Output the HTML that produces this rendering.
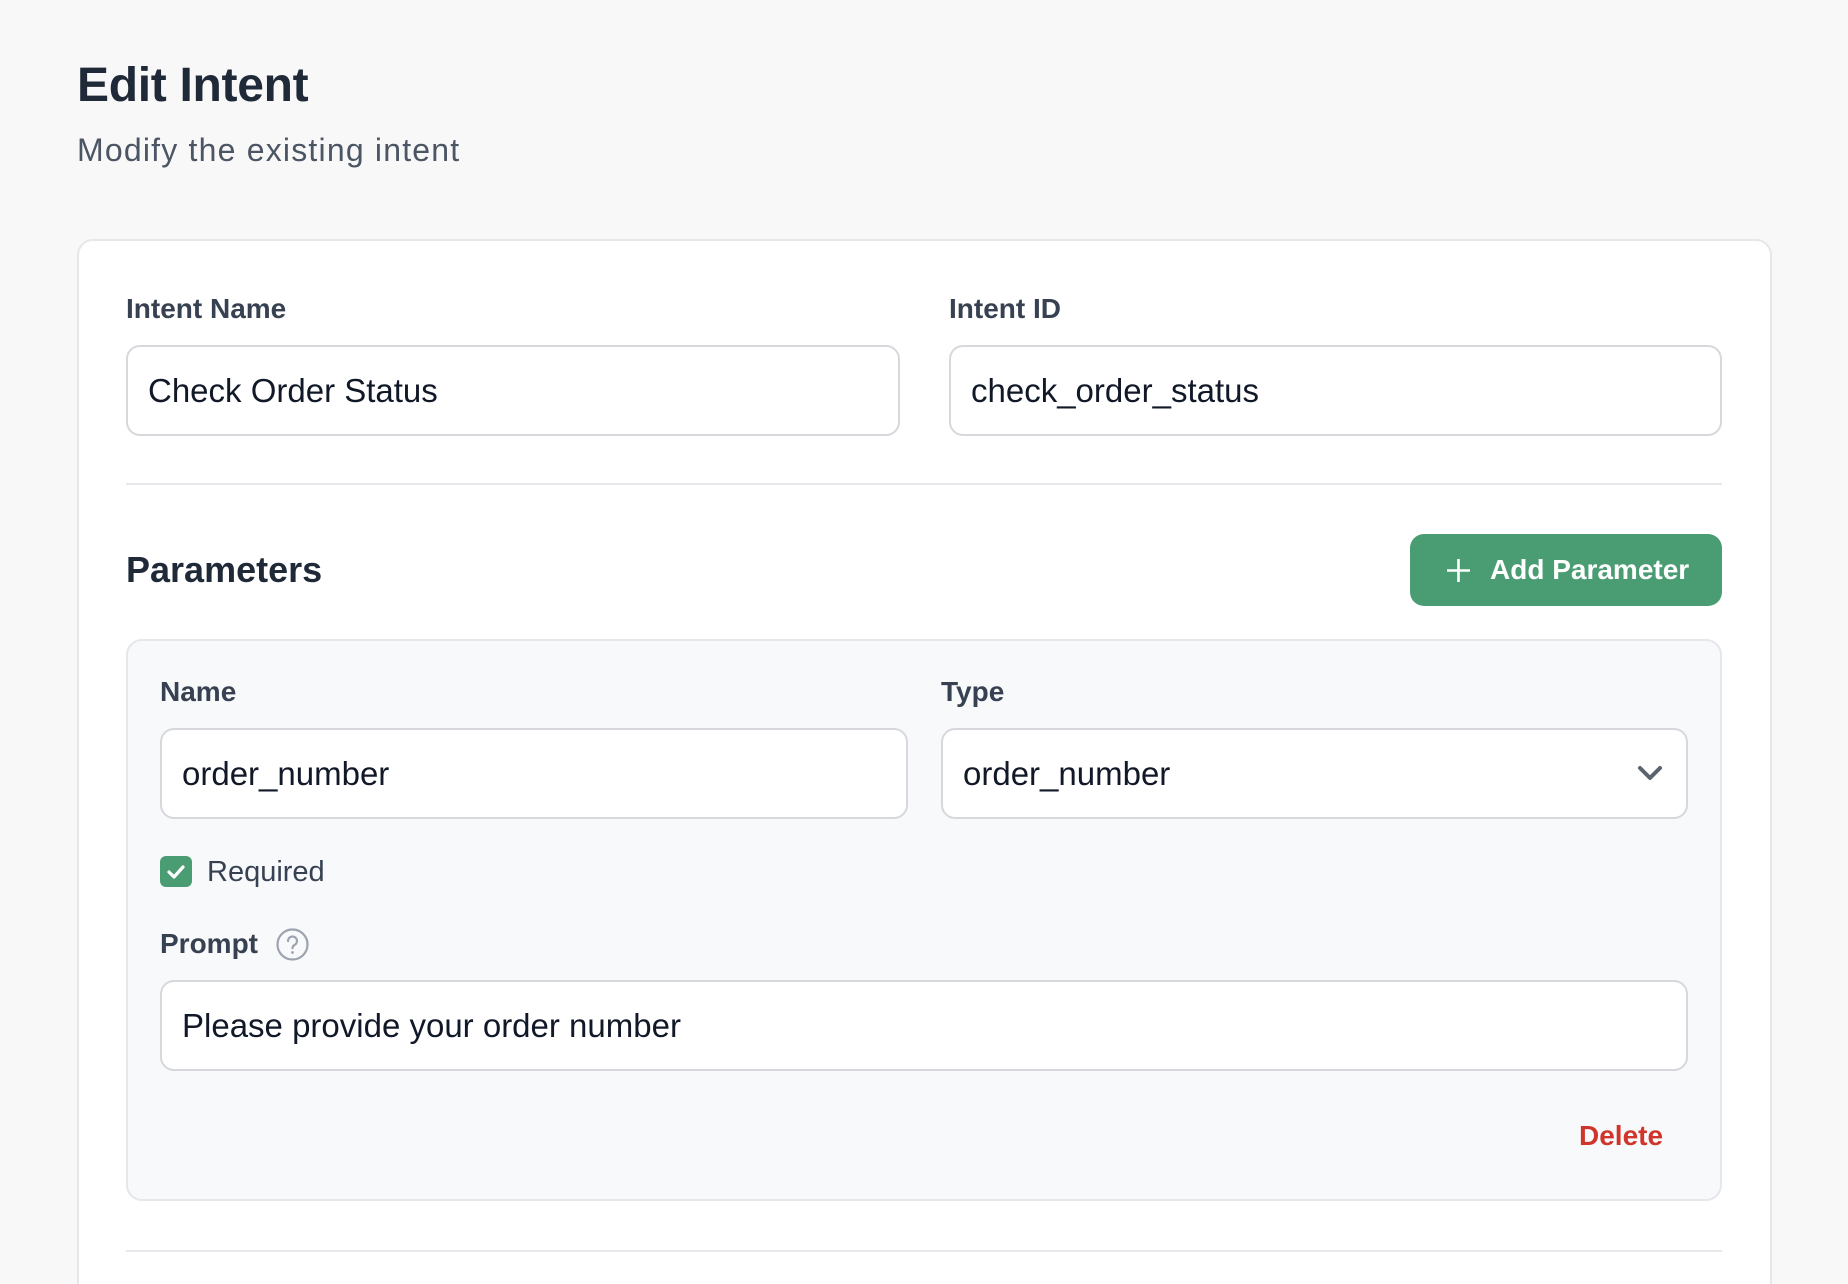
<!DOCTYPE html>
<html><head><meta charset="utf-8"><style>
*{box-sizing:border-box;margin:0;padding:0}
html,body{width:1848px;height:1284px;overflow:hidden}
body{background:#f8f8f9;font-family:"Liberation Sans",sans-serif;position:relative}
.a{position:absolute}
.lbl{font-size:28px;font-weight:bold;color:#374151;line-height:1}
.inp{position:absolute;background:#fff;border:2px solid #d6d8dc;border-radius:14px;font-size:33px;color:#111827;display:flex;align-items:center;padding-left:20px}
</style></head><body>
<div class="a" style="left:77px;top:58px;font-size:48px;font-weight:bold;color:#1f2937;line-height:56px;letter-spacing:-0.3px">Edit Intent</div>
<div class="a" style="left:77px;top:130px;font-size:32px;color:#4b5563;line-height:40px;letter-spacing:1.2px">Modify the existing intent</div>

<div class="a" style="left:77px;top:239px;width:1695px;height:1060px;background:#fff;border:2px solid #e6e7ea;border-radius:16px"></div>

<div class="a lbl" style="left:126px;top:295px">Intent Name</div>
<div class="a lbl" style="left:949px;top:295px">Intent ID</div>
<div class="inp" style="left:126px;top:345px;width:774px;height:91px">Check Order Status</div>
<div class="inp" style="left:949px;top:345px;width:773px;height:91px">check_order_status</div>

<div class="a" style="left:126px;top:483px;width:1596px;height:2px;background:#e7e8eb"></div>

<div class="a" style="left:126px;top:550px;font-size:36px;font-weight:bold;color:#1f2937;line-height:40px">Parameters</div>
<div class="a" style="left:1410px;top:534px;width:312px;height:72px;background:#4a9d72;border-radius:14px"></div>
<svg class="a" style="left:1446px;top:558px" width="25" height="25" viewBox="0 0 25 25"><path d="M12.5 1v23M1 12.5h23" stroke="#fff" stroke-width="2.6" fill="none"/></svg>
<div class="a" style="left:1490px;top:553px;font-size:28px;font-weight:bold;color:#fff;line-height:34px">Add Parameter</div>

<div class="a" style="left:126px;top:639px;width:1596px;height:562px;background:#f8f9fb;border:2px solid #e5e7eb;border-radius:16px"></div>

<div class="a lbl" style="left:160px;top:678px">Name</div>
<div class="a lbl" style="left:941px;top:678px">Type</div>
<div class="inp" style="left:160px;top:728px;width:748px;height:91px">order_number</div>
<div class="inp" style="left:941px;top:728px;width:747px;height:91px">order_number</div>
<svg class="a" style="left:1636px;top:764px" width="28" height="18" viewBox="0 0 28 18"><path d="M4 4l10 10 10-10" stroke="#5b6270" stroke-width="4" fill="none" stroke-linecap="round" stroke-linejoin="round"/></svg>

<div class="a" style="left:160px;top:856px;width:32px;height:31px;background:#4a9d72;border-radius:6px"></div>
<svg class="a" style="left:160px;top:856px" width="32" height="31" viewBox="0 0 32 31"><path d="M9 16l5 5 9-10" stroke="#fff" stroke-width="3.2" fill="none" stroke-linecap="round" stroke-linejoin="round"/></svg>
<div class="a" style="left:207px;top:854px;font-size:29px;color:#374151;line-height:36px">Required</div>

<div class="a lbl" style="left:160px;top:930px">Prompt</div>
<svg class="a" style="left:276px;top:928px" width="33" height="33" viewBox="0 0 33 33"><circle cx="16.5" cy="16.5" r="15" stroke="#9ca3af" stroke-width="2.2" fill="none"/><path d="M12 13a4.5 4.5 0 1 1 6.5 4c-1.5 .8-2 1.6-2 3.2" stroke="#9ca3af" stroke-width="2.2" fill="none" stroke-linecap="round"/><circle cx="16.5" cy="24.5" r="1.4" fill="#9ca3af"/></svg>
<div class="inp" style="left:160px;top:980px;width:1528px;height:91px">Please provide your order number</div>

<div class="a" style="left:1579px;top:1118px;font-size:28px;font-weight:bold;color:#d0352b;line-height:36px">Delete</div>

<div class="a" style="left:126px;top:1250px;width:1596px;height:2px;background:#e7e8eb"></div>
</body></html>
